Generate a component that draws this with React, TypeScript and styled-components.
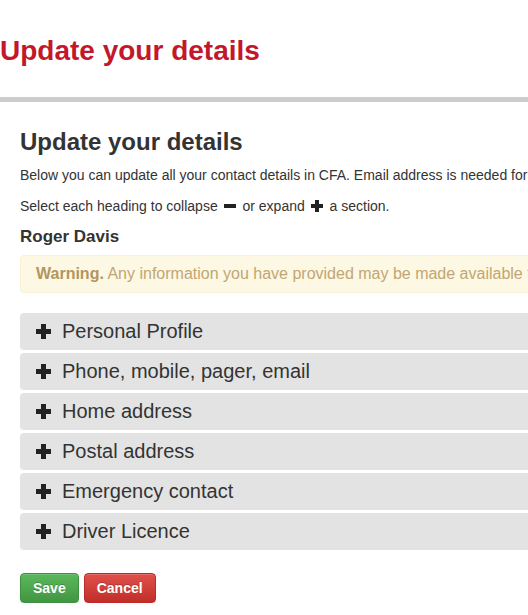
import React from "react"
import styled, { createGlobalStyle } from "styled-components"

const GlobalStyle = createGlobalStyle`
  html, body {
    margin: 0;
    padding: 0;
    background: #fff;
    overflow-x: hidden;
  }
  body {
    font-family: "Liberation Sans", Arial, sans-serif;
    color: #333;
  }
`

const Page = styled.div`
  width: 900px;
`

const Header = styled.header`
  padding-top: 34px;
  height: 102px;
  box-sizing: border-box;
  border-bottom: 5px solid #cccccc;

  h1 {
    margin: 0;
    font-size: 28px;
    line-height: 1.2;
    font-weight: bold;
    color: #c3172c;
  }
`

const Content = styled.main`
  padding: 0 0 0 20px;
`

const Title = styled.h3`
  margin: 27px 0 10px;
  font-size: 24px;
  line-height: 1.1;
  font-weight: bold;
  color: #333;
`

const Text = styled.p`
  margin: 0 0 11px;
  font-size: 14px;
  line-height: 20px;
  white-space: nowrap;
`

const InlineIcon = styled.span`
  display: inline-block;
  vertical-align: -1px;
  margin: 0 3px 0 2px;
  line-height: 0;
`

const Name = styled.h4`
  margin: 6px 0 7px;
  font-size: 17px;
  line-height: 1.2;
  font-weight: bold;
  color: #333;
`

const Alert = styled.div`
  padding: 8px 15px;
  font-size: 16px;
  line-height: 20px;
  background: #fcf8e3;
  border: 1px solid #faf0d8;
  border-radius: 4px;
  color: #c2a672;
  white-space: nowrap;

  strong {
    color: #b3955e;
  }
`

const Accordion = styled.div`
  margin-top: 20px;
  display: flex;
  flex-direction: column;
  gap: 3px;
`

const PanelHeading = styled.div`
  display: flex;
  align-items: center;
  gap: 11px;
  padding: 7.5px 16px;
  background: #e3e3e3;
  border-radius: 4px;
  font-size: 20px;
  line-height: 22px;
  color: #333;
  cursor: pointer;
`

const Actions = styled.div`
  display: flex;
  gap: 5px;
  margin-top: 23px;
`

const Button = styled.button<{ $variant: "save" | "cancel" }>`
  height: 30px;
  padding: 0 12px;
  font-family: "Liberation Sans", Arial, sans-serif;
  font-size: 14px;
  font-weight: bold;
  color: #fff;
  border-radius: 4px;
  text-shadow: 0 -1px 0 rgba(0, 0, 0, 0.2);
  box-shadow: inset 0 1px 0 rgba(255, 255, 255, 0.15), 0 1px 1px rgba(0, 0, 0, 0.075);
  border: 1px solid ${(p) => (p.$variant === "save" ? "#3e8f3e" : "#b92c28")};
  background: ${(p) =>
    p.$variant === "save"
      ? "linear-gradient(to bottom, #5cb85c 0%, #419641 100%)"
      : "linear-gradient(to bottom, #e0504a 0%, #c12e2a 100%)"};
  cursor: pointer;
`

function PlusIcon({ size = 15 }: { size?: number }) {
  return (
    <svg width={size} height={size} viewBox="0 0 15 15" fill="#222">
      <rect x="5" y="0" width="5" height="15" />
      <rect x="0" y="5" width="15" height="5" />
    </svg>
  )
}

function MinusIcon() {
  return (
    <svg width={12} height={12} viewBox="0 0 12 12" fill="#222">
      <rect x="0" y="4" width="12" height="4" />
    </svg>
  )
}

const sections = [
  "Personal Profile",
  "Phone, mobile, pager, email",
  "Home address",
  "Postal address",
  "Emergency contact",
  "Driver Licence",
]

export default function App() {
  return (
    <Page>
      <GlobalStyle />
      <Header>
        <h1>Update your details</h1>
      </Header>
      <Content>
        <Title>Update your details</Title>
        <Text>
          Below you can update all your contact details in CFA. Email address is needed for
          online access to CFA services.
        </Text>
        <Text>
          Select each heading to collapse{" "}
          <InlineIcon>
            <MinusIcon />
          </InlineIcon>{" "}
          or expand{" "}
          <InlineIcon>
            <PlusIcon size={12} />
          </InlineIcon>{" "}
          a section.
        </Text>
        <Name>Roger Davis</Name>
        <Alert>
          <strong>Warning.</strong> Any information you have provided may be made available to
          other CFA members.
        </Alert>
        <Accordion>
          {sections.map((s) => (
            <PanelHeading key={s}>
              <PlusIcon />
              {s}
            </PanelHeading>
          ))}
        </Accordion>
        <Actions>
          <Button $variant="save">Save</Button>
          <Button $variant="cancel">Cancel</Button>
        </Actions>
      </Content>
    </Page>
  )
}
